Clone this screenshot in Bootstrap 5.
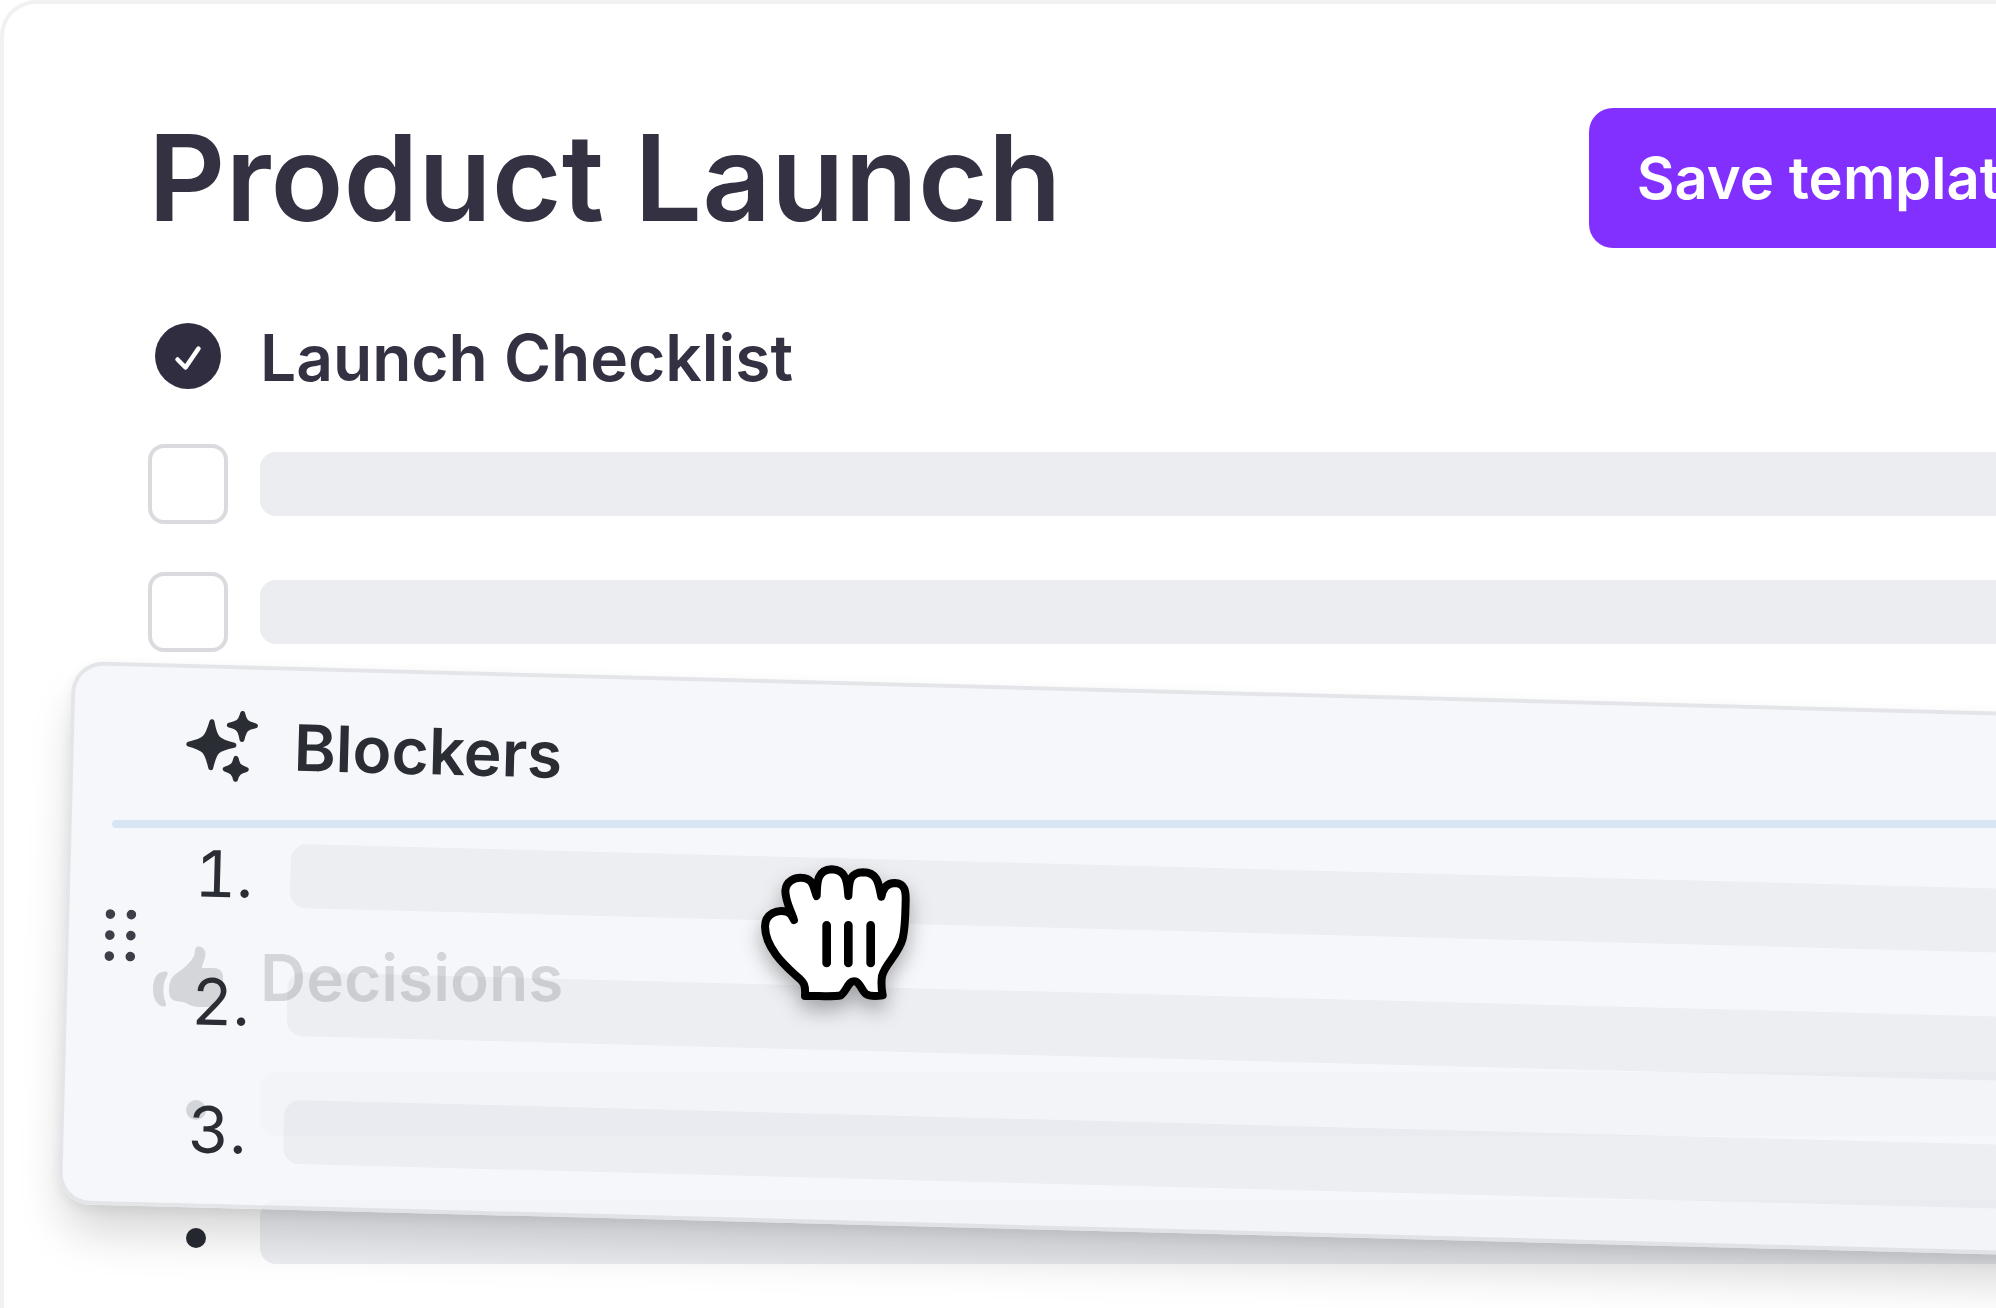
<!DOCTYPE html>
<html lang="en">
<head>
<meta charset="utf-8">
<meta name="viewport" content="width=device-width, initial-scale=1">
<title>Product Launch</title>
<link rel="stylesheet" href="https://cdn.jsdelivr.net/npm/bootstrap@5.3.0/dist/css/bootstrap.min.css">
<style>
  body { font-family: Inter, "Liberation Sans", sans-serif; color: #333142; background: #fff; }
  /* The panel runs past the right edge of the window. */
  .doc-panel { width: calc(100% + 240px); min-height: 100vh; border: 4px solid #f1f1f1; border-bottom: 0; border-radius: 36px 36px 0 0; background: #fff; padding: 104px 150px 44px 144px; }
  .doc-title { font-size: 120px; line-height: 138px; font-weight: 600; }
  .doc-head { margin-bottom: 76px; }
  .btn-save { height: 140px; padding: 0 48px; border: 0; border-radius: 24px; background: #8230ff; color: #fff; font-size: 58px; line-height: 64px; font-weight: 600; }
  .btn-save:hover { background: #7322ec; color: #fff; }
  .stack { gap: 64px; }
  .line-row { height: 64px; gap: 32px; }
  .line-lead { flex: 0 0 80px; font-size: 64px; line-height: 64px; }
  .line-head { padding-top: 4px; font-size: 64px; line-height: 64px; font-weight: 600; }
  .line-fill { height: 64px; border-radius: 16px; background: #ebedf1; }
  .tick-box.form-check-input { width: 80px; height: 80px; margin: 0; border: 4px solid #d9dbde; border-radius: 16px; background-color: #fff; flex: none; }
  .bullet-dot { width: 20px; height: 20px; background: #282b33; margin: 12px 0 0 16px; }
  .drop-line { height: 8px; margin: 176px 0 116px -36px; border-radius: 4px; background: #4496e1; }
  .under-drag { color: #2b3033; }
  /* Section being dragged: tilted and see-through, over the document. */
  .drag-card { top: 657px; left: 68px; right: 60px; padding: 45px 48px 42px 36px; gap: 40px; border: 4px solid rgba(222, 224, 228, .85); border-radius: 32px; background: rgba(243, 246, 249, .84); background-clip: padding-box; color: #2a2d34; transform: rotate(1.5deg); transform-origin: 0 0; box-shadow: 0 32px 48px -8px rgba(0, 0, 0, .18), 0 4px 12px rgba(0, 0, 0, .06); }
  .drag-card .line-head { padding-top: 0; }
  .drag-card .line-fill { background: rgba(34, 30, 60, .04); }
  .num-lead { padding-right: 5px; font-variant-numeric: tabular-nums; }
  .grip { width: 32px; }
  .hand { left: 726px; top: 836px; filter: drop-shadow(0 10px 10px rgba(0, 0, 0, .3)); }
</style>
</head>
<body class="overflow-hidden">
<main class="doc-panel position-relative">
  <header class="doc-head d-flex align-items-center justify-content-between">
    <h1 class="doc-title m-0">Product Launch</h1>
    <button type="button" class="btn btn-save text-nowrap">Save template</button>
  </header>

  <section class="stack d-flex flex-column">
    <div class="line-row d-flex align-items-center">
      <span class="line-lead d-flex justify-content-center">
        <svg width="66" height="66" viewBox="0 0 66 66" aria-hidden="true"><circle cx="33" cy="33" r="33" fill="#302d40"/><path d="M22.500 36.500 30.500 44.500 43.500 25.500" fill="none" stroke="#fff" stroke-width="4.500" stroke-linecap="round" stroke-linejoin="round"/></svg>
      </span>
      <h2 class="line-head m-0">Launch Checklist</h2>
    </div>
    <div class="line-row d-flex align-items-center">
      <input class="form-check-input tick-box" type="checkbox" aria-label="Checklist item 1">
      <div class="line-fill flex-grow-1"></div>
    </div>
    <div class="line-row d-flex align-items-center">
      <input class="form-check-input tick-box" type="checkbox" aria-label="Checklist item 2">
      <div class="line-fill flex-grow-1"></div>
    </div>
  </section>

  <div class="drop-line"></div>

  <section class="under-drag stack d-flex flex-column">
    <div class="line-row d-flex align-items-center">
      <span class="line-lead d-flex justify-content-center">
        <svg width="70" height="61" viewBox="0 0 70 61" fill="#333638" aria-hidden="true"><path d="M12 25.500C3 25.500 0 34 0 43.500 0 52 4 59 9.500 60.500 13 61 14 58.500 12.500 56 9.500 49.500 9.500 37 13.500 31 15.500 27.500 15 25.500 12 25.500Z"/><path d="M16 44C16 36 18.500 30.500 24 27 31 22.500 38 16 41 10 42 7 41.500 4 42.500 2 44-1 52 0 52.500 8 52.500 13 49 18 49 22H60C66 22 70 25 70 31 70 43 67 61 54 61H46C37 61 34 56 27 55.500 19 55.500 16 52 16 44Z"/></svg>
      </span>
      <h2 class="line-head m-0">Decisions</h2>
    </div>
    <div class="line-row d-flex align-items-center">
      <span class="line-lead d-flex justify-content-center"><span class="bullet-dot rounded-circle"></span></span>
      <div class="line-fill flex-grow-1"></div>
    </div>
    <div class="line-row d-flex align-items-center">
      <span class="line-lead d-flex justify-content-center"><span class="bullet-dot rounded-circle"></span></span>
      <div class="line-fill flex-grow-1"></div>
    </div>
  </section>

  <section class="drag-card position-absolute d-flex align-items-center">
    <button type="button" class="grip btn p-0 border-0 d-flex justify-content-center flex-shrink-0" aria-label="Drag section">
      <svg width="32" height="52" viewBox="0 0 32 52" fill="#3c3f48" aria-hidden="true"><circle cx="5" cy="5" r="4.800"/><circle cx="26" cy="5" r="4.800"/><circle cx="5" cy="26" r="4.800"/><circle cx="26" cy="26" r="4.800"/><circle cx="5" cy="47" r="4.800"/><circle cx="26" cy="47" r="4.800"/></svg>
    </button>
    <div class="stack d-flex flex-column flex-grow-1">
      <div class="line-row d-flex align-items-center">
        <span class="line-lead d-flex justify-content-center">
          <svg width="72" height="72" viewBox="0 0 72 72" fill="#2a2d34" stroke="#2a2d34" stroke-width="5" stroke-linejoin="round" aria-hidden="true">
            <path d="M25.500 12C29 29 31 31 48 35 31 39 29 41 25.500 58 21 41 19 39 3 35 19 31 21 29 25.500 12Z"/>
            <path d="M56 3C58 11 60 13 69 15 60 17 58 19 56 29 54 19 52 17 43 15 52 13 54 11 56 3Z"/>
            <path d="M50.500 48C52 55 54 57 61 59 54 61 52 63 50.500 69 49 63 47 61 40 59 47 57 49 55 50.500 48Z"/>
          </svg>
        </span>
        <h2 class="line-head m-0">Blockers</h2>
      </div>
      <div class="line-row d-flex align-items-center">
        <span class="line-lead num-lead text-end">1.</span>
        <div class="line-fill flex-grow-1"></div>
      </div>
      <div class="line-row d-flex align-items-center">
        <span class="line-lead num-lead text-end">2.</span>
        <div class="line-fill flex-grow-1"></div>
      </div>
      <div class="line-row d-flex align-items-center">
        <span class="line-lead num-lead text-end">3.</span>
        <div class="line-fill flex-grow-1"></div>
      </div>
    </div>
  </section>

  <!-- Grabbing hand pointer -->
  <svg class="hand position-absolute" width="220" height="200" viewBox="0 0 660 600" aria-hidden="true">
    <path d="M225 468C227 436 224 428 198 407C160 372 106 322 105 260C105 222 142 206 172 216C182 220 188 230 192 240C184 212 166 186 166 152C168 122 196 112 214 113C250 114 250 142 260 168C262 138 256 90 305 88C354 90 352 136 355 168C358 136 352 98 400 97C446 98 446 136 454 170C458 148 468 129 494 129C524 130 528 152 527 182C526 226 526 262 518 296C504 346 466 370 456 408C453 428 454 444 458 466C440 469 420 470 408 462C394 452 390 424 372 424C354 424 350 454 332 466C320 470 280 468 225 468Z" fill="#fff" stroke="#000" stroke-width="24" stroke-linejoin="round"/>
    <path d="M290 256V369M355 256V369M422 256V369" fill="none" stroke="#000" stroke-width="26" stroke-linecap="round"/>
  </svg>
</main>
<script src="https://cdn.jsdelivr.net/npm/bootstrap@5.3.0/dist/js/bootstrap.bundle.min.js"></script>
</body>
</html>
